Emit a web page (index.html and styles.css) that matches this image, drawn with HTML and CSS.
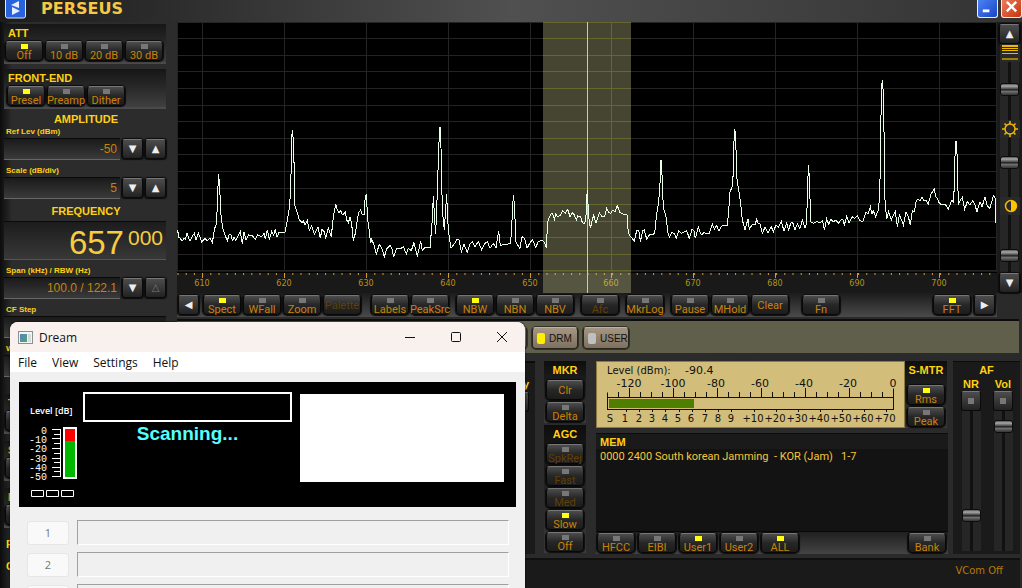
FILE: index.html
```html
<!DOCTYPE html>
<html lang="en">
<head>
    <meta charset="UTF-8">
    <meta name="viewport" content="width=device-width, initial-scale=1.0">
    <title>Perseus</title>
    <link rel="stylesheet" href="styles.css">
</head>
<body>
<div class="app">
    <header class="titlebar">
        <svg class="logo" viewBox="0 0 21 19">
            <rect x="0.5" y="-3" width="20" height="21" rx="2" fill="#2763dd" stroke="#dfe8fb"/>
            <path d="M14 1v7L6 5zM7 7v8l8-4z" fill="#e8efff"/>
        </svg>
        <h1>PERSEUS</h1>
        <button class="win-btn minimize" aria-label="Minimize"><svg viewBox="0 0 20 18"><path d="M5 11.500h7" stroke="#fff" stroke-width="3"/></svg></button>
        <button class="win-btn close" aria-label="Close"><svg viewBox="0 0 20 18"><path d="M5 2l10 10M15 2L5 12" stroke="#fff" stroke-width="2.500"/></svg></button>
    </header>

    <div class="main">
        <aside class="sidebar">
            <section class="group">
                <h2>ATT</h2>
                <div class="keys">
                    <button class="key on">Off</button>
                    <button class="key">10 dB</button>
                    <button class="key">20 dB</button>
                    <button class="key">30 dB</button>
                </div>
            </section>
            <section class="group front-end">
                <h2>FRONT-END</h2>
                <div class="keys">
                    <button class="key on">Presel</button>
                    <button class="key">Preamp</button>
                    <button class="key">Dither</button>
                </div>
            </section>

            <h2 class="heading">AMPLITUDE</h2>
            <div class="readout">
                <label for="ref">Ref Lev (dBm)</label>
                <div class="readout-row">
                    <input id="ref" type="text" value="-50">
                    <button class="arrow" aria-label="Down">&#9660;</button>
                    <button class="arrow" aria-label="Up">&#9650;</button>
                </div>
            </div>
            <div class="readout">
                <label for="scale">Scale (dB/div)</label>
                <div class="readout-row">
                    <input id="scale" type="text" value="5">
                    <button class="arrow" aria-label="Down">&#9660;</button>
                    <button class="arrow" aria-label="Up">&#9650;</button>
                </div>
            </div>

            <h2 class="heading">FREQUENCY</h2>
            <div class="frequency"><span class="khz">657</span><span class="hz">000</span></div>
            <div class="readout">
                <label for="span">Span (kHz) / RBW (Hz)</label>
                <div class="readout-row">
                    <input id="span" type="text" value="100.0 / 122.1">
                    <button class="arrow" aria-label="Down">&#9660;</button>
                    <button class="arrow dim" aria-label="Up">&#9651;</button>
                </div>
            </div>
            <div class="readout">
                <label for="step">CF Step</label>
                <div class="readout-row"><input id="step" type="text"></div>
            </div>
            <div class="readout">
                <label for="win">W</label>
                <div class="readout-row"><input id="win" type="text"></div>
            </div>
            <div class="more">
                <section class="group"><h2>T</h2><button class="key" aria-label="T"></button></section>
                <section class="group"><h2>S</h2><button class="key" aria-label="S"></button></section>
                <section class="group"><h2>I</h2><button class="key" aria-label="I"></button></section>
                <h2>P</h2>
                <h2>C</h2>
            </div>
        </aside>

        <div class="work">
            <div class="upper">
                <div class="spectrum">
                    <svg class="plot" viewBox="0 0 820 271">
                        <rect width="820" height="249" fill="#000"/>
                        <rect y="249" width="820" height="22" fill="#191919"/>
                        <path class="grid" d="M0 .5h820M0 16.500h820M0 33.500h820M0 49.500h820M0 66.500h820M0 83.500h820M0 99.500h820M0 116.500h820M0 132.500h820M0 149.500h820M0 166.500h820M0 182.500h820M0 199.500h820M0 215.500h820M0 232.500h820M0 248.500h820"/>
                        <path class="grid" d="M.5 0v249M25.500 0v249M107.500 0v249M189.500 0v249M271.500 0v249M353.500 0v249M434.500 0v249M516.500 0v249M598.500 0v249M680.500 0v249M762.500 0v249M819.500 0v249"/>
                        <path d="M0 250.500h820" stroke="#000"/>
                        <path class="ticks" d="M.5 252h820" stroke-width="2" stroke-dasharray="1 7.200"/>
                        <path class="ticks" d="M25.500 251v5M107.500 251v5M189.500 251v5M271.500 251v5M353.500 251v5M434.500 251v5M516.500 251v5M598.500 251v5M680.500 251v5M762.500 251v5"/>
                        <g class="scale">
                            <text x="25" y="264">610</text>
                            <text x="107" y="264">620</text>
                            <text x="189" y="264">630</text>
                            <text x="271" y="264">640</text>
                            <text x="353" y="264">650</text>
                            <text x="434" y="264">660</text>
                            <text x="516" y="264">670</text>
                            <text x="598" y="264">680</text>
                            <text x="680" y="264">690</text>
                            <text x="762" y="264">700</text>
                        </g>
                        <rect x="366" width="88" height="271" fill="rgba(215,215,155,.32)"/>
                        <path class="band-grid" d="M366 .5h88M366 16.500h88M366 33.500h88M366 49.500h88M366 66.500h88M366 83.500h88M366 99.500h88M366 116.500h88M366 132.500h88M366 149.500h88M366 166.500h88M366 182.500h88M366 199.500h88M366 215.500h88M366 232.500h88M366 248.500h88M434.500 0v249"/>
                        <path d="M410.500 0v271" stroke="#ffc83c"/>
                        <!-- trace, drawn at three units per pixel -->
                        <g class="trace">
                            <polyline transform="translate(-7 -2) scale(.33333)" points="23,630 26,652 31,655 36,664 42,655 46,658 51,640 55,652 60,662 66,650 73,640 78,660 85,640 90,652 95,666 105,655 112,662 120,655 127,668 134,625 140,610 143,515 146,462 150,525 153,585 158,625 165,645 172,662 178,643 184,645 187,664 192,650 197,660 203,650 211,635 217,672 222,637 228,660 236,645 248,648 256,658 263,645 275,650 282,640 286,658 292,630 298,658 305,635 311,645 316,628 321,652 327,637 345,637 352,600 359,560 363,470 364,365 367,330 370,360 373,460 374,555 380,572 388,600 396,608 400,602 405,615 412,602 418,632 425,617 433,642 444,622 451,654 456,628 462,634 467,654 475,625 484,650 488,608 492,580 497,553 502,570 507,577 512,572 517,585 526,577 530,600 535,608 540,592 545,612 550,662 556,640 562,600 566,577 572,570 577,585 582,585 585,540 589,522 593,600 598,635 602,670 605,658 612,675 619,702 628,673 636,687 643,710 651,685 660,676 667,690 671,712 680,685 690,687 700,680 709,702 715,685 724,692 732,668 742,710 752,662 757,692 765,682 780,684 786,610 790,528 794,600 797,642 802,515 806,390 809,322 812,322 815,500 819,590 823,630 830,522 833,600 838,655 843,685 852,673 860,660 867,660 874,695 882,673 892,697 900,672 907,665 915,680 925,665 935,690 945,670 952,665 960,685 970,670 978,683 986,632 991,678 1000,673 1010,673 1022,670 1026,600 1030,525 1034,560 1037,665 1045,678 1050,685 1056,650 1064,655 1071,685 1080,668 1088,660 1097,682 1105,665 1117,660"/>
                            <polyline transform="translate(363 -2) scale(.33333)" points="7,660 14,668 19,683 23,605 28,592 34,580 38,582 43,598 47,582 53,590 62,585 68,572 76,580 83,568 90,590 97,578 103,585 109,600 113,588 122,590 127,608 134,612 138,590 139,545 142,510 146,590 151,625 157,600 161,585 168,610 178,578 186,590 194,590 200,565 206,578 212,580 217,570 225,576 232,557 240,578 248,582 257,585 261,585 265,640 272,650 283,663 290,632 296,630 301,665 308,632 313,630 320,657 328,645 335,645 344,640 349,590 356,545 360,490 363,420 367,480 369,540 372,570 378,590 384,640 388,652 395,638 403,640 409,655 416,632 425,640 433,635 440,632 448,655 456,628 462,632 466,655 475,622 484,645 492,638 500,642 508,640 517,613 523,627 530,617 537,633 545,618 555,617 562,617 567,560 569,520 576,500 580,460 581,380 584,328 587,345 590,470 596,510 602,550 607,600 615,630 624,597 628,628 636,615 645,615 650,598 655,612 660,612 667,640 675,622 684,640 694,620 700,636 708,615 715,622 724,605 732,633 740,610 746,630 752,610 758,607 765,630 772,612 780,625 787,600 795,625 800,608 803,485 806,435 809,500 812,605 820,610 830,605 840,608 848,603 853,630 860,597 866,613 872,598 880,605 888,600 895,610 902,600 908,597 913,615 920,590 927,608 936,590 944,595 952,588 960,602 968,605 977,578 985,580 991,560 996,583 1000,572 1007,590 1015,570 1019,530 1022,375 1024,205 1027,180 1030,220 1033,390 1035,540 1040,598 1046,575 1054,600 1060,585 1066,575 1072,620 1078,585 1084,598 1090,615 1098,575 1105,590 1111,615 1117,572 1123,575 1128,545 1134,537 1140,542 1146,532 1152,543 1158,540 1165,552 1173,522 1183,507 1187,530 1192,535 1198,550 1206,555 1215,552 1225,567 1236,540 1241,548 1244,450 1246,370 1249,362 1252,420 1255,555 1261,540 1267,532 1274,568 1282,545 1290,555 1298,542 1304,552 1311,575 1320,545 1326,560 1335,532 1342,558 1350,565 1360,527 1366,535 1368,610"/>
                        </g>
                    </svg>
                    <div class="toolbar">
                        <button class="arrow" aria-label="Left">&#9664;</button>
                        <div class="keys">
                            <button class="key on">Spect</button>
                            <button class="key">WFall</button>
                            <button class="key">Zoom</button>
                            <button class="key plain" disabled>Palette</button>
                        </div>
                        <div class="keys">
                            <button class="key">Labels</button>
                            <button class="key">PeakSrc</button>
                        </div>
                        <div class="keys">
                            <button class="key on">NBW</button>
                            <button class="key">NBN</button>
                            <button class="key">NBV</button>
                        </div>
                        <div class="keys"><button class="key" disabled>Afc</button></div>
                        <div class="keys"><button class="key">MkrLog</button></div>
                        <div class="keys">
                            <button class="key">Pause</button>
                            <button class="key">MHold</button>
                            <button class="key plain">Clear</button>
                        </div>
                        <div class="keys fn"><button class="key">Fn</button></div>
                        <div class="keys end"><button class="key on">FFT</button></div>
                        <button class="arrow" aria-label="Right">&#9654;</button>
                    </div>
                </div>
                <div class="strip">
                    <button class="arrow" aria-label="Up">&#9650;</button>
                    <svg class="strip-icon" viewBox="0 0 20 18"><path d="M2 1h16v2H2zM2 4h16v1H2zM2 6h16v1H2zM2 9h16v1H2z" fill="#e8b90c"/><path d="M2 14h16v2H2z" fill="#a07c08"/></svg>
                    <input class="fader" type="range" value="54" aria-label="Range">
                    <svg class="strip-icon" viewBox="0 0 20 18"><g fill="none" stroke="#f2b705" stroke-width="1.500"><circle cx="10" cy="9" r="5"/><path d="M10 4V1M10 14v3M5 9H2M15 9h3M6.500 5.500l-2-2M13.500 5.500l2-2M6.500 12.500l-2 2M13.500 12.500l2 2"/></g></svg>
                    <input class="fader" type="range" value="61" aria-label="Brightness">
                    <svg class="strip-icon" viewBox="0 0 20 18"><circle cx="11" cy="9" r="5.500" fill="none" stroke="#f2b705" stroke-width="1.500"/><path d="M11 3.500a5.500 5.500 0 0 1 0 11z" fill="#ffc400"/></svg>
                    <input class="fader" type="range" value="24" aria-label="Contrast">
                    <button class="arrow" aria-label="Down">&#9660;</button>
                </div>
            </div>

            <div class="modes">
                <button class="mode" aria-label="Mode"></button>
                <button class="mode on">DRM</button>
                <button class="mode">USER</button>
            </div>

            <div class="lower">
                <section class="blank">
                    <h2>y</h2>
                    <button class="led-btn" aria-label="y"></button>
                </section>
                <div class="agc-col">
                    <section class="stack">
                        <h2>MKR</h2>
                        <button class="key plain">Clr</button>
                        <button class="key">Delta</button>
                    </section>
                    <section class="stack">
                        <h2>AGC</h2>
                        <button class="key" disabled>SpkRej</button>
                        <button class="key" disabled>Fast</button>
                        <button class="key" disabled>Med</button>
                        <button class="key on">Slow</button>
                        <button class="key">Off</button>
                    </section>
                </div>
                <div class="center">
                    <div class="meter-row">
                        <svg class="meter" viewBox="0 0 309 67">
                            <rect x=".5" y=".5" width="308" height="66" fill="#d2be7a" stroke="#8b7b43"/>
                            <text x="11" y="13">Level (dBm):</text>
                            <text class="dbm-value" x="89" y="13">-90.4</text>
                            <path d="M11.500 48.500v-17M22.500 36v-5M33.500 36v-9M44.500 36v-5M55.500 36v-5M66.500 36v-5M77.500 36v-9M88.500 36v-5M99.500 36v-5M110.500 36v-5M121.500 36v-9M132.500 36v-5M143.500 36v-5M154.500 36v-5M165.500 36v-9M176.500 36v-5M187.500 36v-5M198.500 36v-5M209.500 36v-9M220.500 36v-5M231.500 36v-5M242.500 36v-5M253.500 36v-9M264.500 36v-5M275.500 36v-5M286.500 36v-5M297.500 48.500v-21M11 36.500h287M11 48.500h287"/>
                            <path d="M30.500 48v3M43.500 48v3M56.500 48v3M69.500 48v3M83.500 48v3M96.500 48v3M109.500 48v3M122.500 48v3M135.500 48v3M158.500 48v3M180.500 48v3M202.500 48v3M224.500 48v3M246.500 48v3M268.500 48v3M290.500 48v3"/>
                            <rect x="13" y="38" width="85" height="9" fill="#4f7f00"/>
                            <g class="dbm">
                                <text x="33" y="26">-120</text>
                                <text x="77" y="26">-100</text>
                                <text x="120" y="26">-80</text>
                                <text x="164" y="26">-60</text>
                                <text x="208" y="26">-40</text>
                                <text x="252" y="26">-20</text>
                                <text x="297" y="26">0</text>
                            </g>
                            <g class="s-units">
                                <text x="14" y="61">S</text>
                                <text x="29" y="61">1</text>
                                <text x="43" y="61">2</text>
                                <text x="56" y="61">3</text>
                                <text x="69" y="61">4</text>
                                <text x="82" y="61">5</text>
                                <text x="95" y="61">6</text>
                                <text x="109" y="61">7</text>
                                <text x="122" y="61">8</text>
                                <text x="135" y="61">9</text>
                                <text x="157" y="61">+10</text>
                                <text x="179" y="61">+20</text>
                                <text x="201" y="61">+30</text>
                                <text x="223" y="61">+40</text>
                                <text x="245" y="61">+50</text>
                                <text x="267" y="61">+60</text>
                                <text x="289" y="61">+70</text>
                            </g>
                        </svg>
                        <section class="stack smtr">
                            <h2>S-MTR</h2>
                            <button class="key on">Rms</button>
                            <button class="key">Peak</button>
                        </section>
                    </div>
                    <section class="mem">
                        <h2>MEM</h2>
                        <ul><li>0000 2400 South korean Jamming&nbsp; - KOR (Jam)&nbsp;&nbsp; 1-7</li></ul>
                        <div class="mem-keys">
                            <button class="key">HFCC</button>
                            <button class="key">EIBI</button>
                            <button class="key on">User1</button>
                            <button class="key">User2</button>
                            <button class="key on">ALL</button>
                            <button class="key bank">Bank</button>
                        </div>
                    </section>
                </div>
                <section class="af">
                    <h2>AF</h2>
                    <div class="af-faders">
                        <div class="af-col">
                            <label for="nr">NR</label>
                            <button class="led-btn" aria-label="NR"></button>
                            <input class="fader" id="nr" type="range" value="23">
                        </div>
                        <div class="af-col">
                            <label for="vol">Vol</label>
                            <button class="led-btn" aria-label="Mute"></button>
                            <input class="fader" id="vol" type="range" value="93">
                        </div>
                    </div>
                </section>
            </div>
            <footer class="status"><span>VCom Off</span></footer>
        </div>
    </div>

    <div class="dream">
        <div class="dream-title">
            <svg class="dream-icon" viewBox="0 0 15 13"><rect x=".5" y=".5" width="14" height="12" fill="#f4f6f6" stroke="#8b9095"/><path d="M2 3h7v8H2z" fill="#4f9a8c"/><path d="M2 3h3v5H2z" fill="#5b86b0"/><path d="M10 3h3v8h-3z" fill="#d5dcdc"/></svg>
            <span>Dream</span>
            <div class="dream-controls">
                <button aria-label="Minimize"><svg viewBox="0 0 12 12"><path d="M1 6.500h10"/></svg></button>
                <button aria-label="Maximize"><svg viewBox="0 0 12 12"><rect x="1.500" y="1.500" width="9" height="9" rx="1"/></svg></button>
                <button aria-label="Close"><svg viewBox="0 0 12 12"><path d="M1 1l10 10M11 1L1 11"/></svg></button>
            </div>
        </div>
        <nav class="dream-menu">
            <a href="#">File</a>
            <a href="#">View</a>
            <a href="#">Settings</a>
            <a href="#">Help</a>
        </nav>
        <div class="display">
            <div class="level">
                <span>Level [dB]</span>
                <svg viewBox="0 0 64 80">
                    <g class="level-text">
                        <text x="28" y="14">0</text>
                        <text x="28" y="23">-10</text>
                        <text x="28" y="32">-20</text>
                        <text x="28" y="42">-30</text>
                        <text x="28" y="51">-40</text>
                        <text x="28" y="60">-50</text>
                    </g>
                    <path class="line" d="M33 9.500h9M35 14.500h6M33 18.500h8M35 23.500h6M33 28.500h8M35 33.500h6M33 38.500h8M35 42.500h6M33 47.500h8M35 51.500h6M33 56.500h9M41.500 9v48"/>
                    <rect x="44" y="7" width="14" height="52" fill="#fff"/>
                    <rect x="46" y="9" width="10" height="12" fill="#f00"/>
                    <rect x="46" y="21" width="10" height="36" fill="#00b800"/>
                    <path class="line" d="M12.500 70.500h12v6h-12zM27.500 70.500h12v6h-12zM42.500 70.500h12v6h-12z"/>
                </svg>
            </div>
            <div class="station">
                <div class="station-name"></div>
                <p>Scanning...</p>
            </div>
            <div class="picture"></div>
        </div>
        <div class="services">
            <button disabled>1</button><div class="service"></div>
            <button disabled>2</button><div class="service"></div>
            <button disabled aria-label="Next service"></button><div class="service"></div>
        </div>
    </div>
</div>
</body>
</html>
```
FILE: styles.css
```css
* {
    box-sizing: border-box;
}
body {
    margin: 0;
    background: #1a1a1a;
    color: #ffd013;
    font-family: "Liberation Sans", Arial, sans-serif;
    font-size: 11px;
}
h1, h2, p, ul {
    margin: 0;
    padding: 0;
}
button, input {
    margin: 0;
    padding: 0;
    border: 0;
    font: inherit;
}
h2 {
    font-size: 11px;
    line-height: 14px;
    font-weight: bold;
}
.app {
    position: relative;
    height: 100vh;
    overflow: hidden;
    background: linear-gradient(90deg, #0c0c0c, #2c2c2c 12px, #2a2a2a);
}

/* title bar */
.titlebar {
    display: flex;
    height: 22px;
    padding-left: 5px;
    background: linear-gradient(90deg, #1c1c1c, #303030 20%, #505050 50%, #333);
}
.logo {
    width: 21px;
    height: 19px;
}
.titlebar h1 {
    flex: 1;
    margin-left: 15px;
    color: #f6c944;
    font: bold 16px/18px "DejaVu Sans", sans-serif;
}
.win-btn {
    width: 21px;
    height: 18px;
    margin-right: 3px;
    border: 1px solid #eee;
    border-top: 0;
    border-radius: 0 0 3px 3px;
}
.win-btn svg {
    display: block;
    width: 19px;
    height: 17px;
}
.minimize {
    background: linear-gradient(135deg, #4d82f2, #1746c8);
}
.close {
    margin-right: 0;
    background: linear-gradient(135deg, #ec7b5c, #c9330c);
}
.main {
    display: flex;
}

/* buttons */
.key {
    position: relative;
    flex: none;
    width: 38px;
    height: 20px;
    padding-top: 8px;
    border: 1px solid #080808;
    border-top-color: #777;
    border-radius: 4px;
    background: linear-gradient(#4c4c4c, #262626 50%, #1c1c1c);
    box-shadow: 0 0 1px 1px #0c0c0c;
    color: #c98208;
    font-family: Roboto, sans-serif;
    font-size: 11px;
    line-height: 12px;
    white-space: nowrap;
    display: flex;
    justify-content: center;
}
.key::before {
    content: "";
    position: absolute;
    top: 2px;
    left: 15px;
    width: 7px;
    height: 5px;
    background: #777;
}
.key.on::before {
    background: #ffff10;
}
.key.plain {
    padding-top: 4px;
}
.key.plain::before {
    display: none;
}
.key:disabled {
    color: #614006;
}
.keys {
    display: flex;
    gap: 2px;
}
.arrow {
    flex: none;
    width: 21px;
    height: 20px;
    border: 1px solid #0a0a0a;
    border-top-color: #777;
    border-radius: 3px;
    background: linear-gradient(#4c4c4c, #222);
    box-shadow: 0 0 1px 1px #0c0c0c;
    color: #eee;
    font: 10px/16px "DejaVu Sans", sans-serif;
}
.arrow.dim {
    color: #777;
}

/* left column */
.sidebar {
    flex: none;
    width: 177px;
    padding: 2px 11px 0 4px;
}
.group {
    height: 40px;
    margin-bottom: 5px;
    padding: 2px 1px 0;
    border-bottom: 2px solid #4a4a4a;
    background: linear-gradient(#161616, #292929 50%, #404040);
}
.group h2 {
    padding-left: 3px;
    margin-bottom: 1px;
}
.front-end {
    margin-bottom: 2px;
    padding-left: 3px;
}
.front-end h2 {
    padding-left: 1px;
}
.heading {
    margin-top: 3px;
    padding-left: 2px;
    text-align: center;
}
.readout {
    margin-bottom: 5px;
}
.readout label {
    display: block;
    padding-left: 2px;
    font-size: 8px;
    font-weight: bold;
    line-height: 12px;
}
.readout-row {
    display: flex;
    align-items: center;
    gap: 2px;
}
.readout input {
    flex: 1;
    min-width: 0;
    height: 22px;
    padding-right: 3px;
    border-top: 1px solid #0a0a0a;
    border-bottom: 1px solid #666;
    background: linear-gradient(#1a1a1a, #3a3a3a);
    color: #c98208;
    font-size: 12px;
    text-align: right;
}
.frequency {
    display: flex;
    justify-content: flex-end;
    height: 39px;
    margin: 3px 0 5px;
    padding: 2px 3px 0 0;
    border-top: 1px solid #0a0a0a;
    border-bottom: 1px solid #555;
    background: linear-gradient(#1c1c1c, #383838);
    color: #f8cc3e;
}
.khz {
    margin-right: 4px;
    font-size: 33px;
    line-height: 38px;
}
.hz {
    font-size: 21px;
    line-height: 28px;
}
.more {
    padding-top: 12px;
}
.more .group {
    margin-bottom: 7px;
}
.more > h2 {
    padding: 2px 0 6px 2px;
}

/* spectrum */
.work {
    flex: 1;
    min-width: 0;
}
.upper {
    display: flex;
}
.spectrum {
    flex: 1;
    min-width: 0;
}
.plot {
    display: block;
    width: 100%;
}
.grid, .band-grid, .ticks {
    fill: none;
    stroke: #242424;
}
.band-grid {
    stroke: #66662f;
}
.ticks {
    stroke: #dc9a20;
}
.scale {
    fill: #b8930f;
    font: 8px "DejaVu Sans", sans-serif;
    text-anchor: middle;
}
.trace {
    fill: none;
    stroke: #e9ffe9;
    shape-rendering: crispEdges;
}
.trace polyline {
    vector-effect: non-scaling-stroke;
}
.toolbar {
    display: flex;
    height: 24px;
    padding: 2px 2px 0 1px;
    border-bottom: 1px solid #4a4a4a;
    background: linear-gradient(#1c1c1c, #484848);
}
.toolbar .keys {
    margin-right: 7px;
}
.toolbar .arrow + .keys {
    margin: 0 10px 0 4px;
}
.toolbar .fn {
    margin-left: 6px;
}
.toolbar .end {
    margin: 0 3px 0 auto;
}
.strip {
    display: flex;
    flex-direction: column;
    align-items: center;
    flex: none;
    width: 25px;
    padding-top: 2px;
    height: 271px;
    background: #1a1a1a;
}
.strip-icon {
    flex: none;
    width: 20px;
    height: 18px;
    background: #292929;
}
.strip .fader {
    flex: 1;
    min-height: 0;
}
.fader {
    appearance: none;
    writing-mode: vertical-lr;
    direction: rtl;
    width: 19px;
    background: linear-gradient(90deg, #262626 8px, #111 8px, #111 11px, #262626 11px);
}
.fader::-webkit-slider-thumb {
    appearance: none;
    width: 19px;
    height: 13px;
    border: 1px solid #0c0c0c;
    border-radius: 3px;
    background: linear-gradient(#555, #aaa 2px, #444 5px, #111 6px, #777 7px, #333);
}

/* mode bar */
.modes {
    display: flex;
    gap: 5px;
    height: 34px;
    margin: 2px 3px 8px 0;
    padding: 6px 0 0 304px;
    border-top: 2px solid #0c0c0c;
    background: #5f5f4b;
}
.mode {
    display: flex;
    align-items: center;
    gap: 4px;
    width: 46px;
    height: 22px;
    padding-left: 4px;
    border: 1px solid #292620;
    border-top-color: #c0b29f;
    border-radius: 4px;
    background: linear-gradient(#a59684, #7d705f);
    box-shadow: 0 0 0 1px #33322a;
    color: #111;
    font-size: 10px;
}
.mode::before {
    content: "";
    flex: none;
    width: 8px;
    height: 11px;
    border-radius: 2px;
    background: #c0c0c0;
}
.mode.on::before {
    background: #ffee00;
}

/* lower panels */
.lower {
    display: flex;
    height: 193px;
    padding-right: 2px;
}
.blank {
    display: flex;
    flex: 1;
    flex-direction: column;
    align-items: flex-end;
    gap: 1px;
    height: 193px;
    margin-right: 9px;
    padding: 14px 6px 0 0;
    border-top: 2px solid #0c0c0c;
    background: #1a1a1a;
}
.agc-col {
    width: 42px;
    margin-right: 10px;
}
.stack {
    display: flex;
    flex-direction: column;
    align-items: center;
    gap: 2px;
    width: 42px;
    padding-bottom: 1px;
    background: linear-gradient(#0e0e0e, #3c3c3c);
}
.stack h2 {
    height: 17px;
    padding-top: 2px;
}
.stack + .stack {
    margin-top: 2px;
}
.center {
    width: 352px;
}
.meter-row {
    display: flex;
}
.meter {
    width: 309px;
    height: 67px;
    fill: #111;
    font: 10px "DejaVu Sans", sans-serif;
}
.meter path {
    fill: none;
    stroke: #111;
}
.dbm, .s-units {
    text-anchor: middle;
}
.dbm, .dbm-value {
    font-size: 11px;
}
.smtr h2 {
    height: 22px;
}
.mem {
    margin-top: 5px;
    background: #1a1a1a;
    border-top: 1px solid #0c0c0c;
}
.mem h2 {
    padding: 1px 4px 0;
}
.mem ul {
    height: 83px;
    padding: 0 4px;
    background: #131313;
    border-bottom: 1px solid #080808;
    color: #f5c63a;
    font: 11px/16px Roboto, sans-serif;
    list-style: none;
}
.mem-keys {
    display: flex;
    gap: 3px;
    padding: 1px 2px 1px 1px;
    background: linear-gradient(#202020, #444);
}
.bank {
    margin-left: auto;
}
.af {
    width: 67px;
    margin-left: 5px;
    padding-top: 1px;
    border-top: 1px solid #0c0c0c;
    background: #1a1a1a;
    text-align: center;
}
.af-faders {
    display: flex;
    gap: 12px;
    padding-left: 8px;
}
.af-col {
    display: flex;
    flex-direction: column;
    align-items: center;
    width: 20px;
}
.af label {
    font-weight: bold;
    line-height: 14px;
}
.af .fader {
    height: 140px;
}
.led-btn {
    width: 20px;
    height: 20px;
    border: 1px solid #0a0a0a;
    border-top-color: #777;
    border-radius: 3px;
    background: linear-gradient(#4c4c4c, #222);
}
.led-btn::before {
    content: "";
    display: block;
    width: 6px;
    height: 6px;
    margin: auto;
    background: #777;
}
.status {
    height: 100px;
    margin: 4px 2px 0 0;
    padding-top: 3px;
    border-top: 2px solid #101010;
    background: #1a1a1a;
    color: #b87808;
    font: 10px/16px "DejaVu Sans", sans-serif;
    text-align: right;
}
.status span {
    padding-right: 17px;
}

/* Dream window */
.dream {
    position: absolute;
    top: 322px;
    left: 10px;
    width: 515px;
    height: 400px;
    border-radius: 8px 8px 0 0;
    overflow: hidden;
    background: #f0f0f0;
    color: #111;
    font-family: "Open Sans", "Noto Sans", sans-serif;
    font-size: 12px;
    box-shadow: 0 0 2px #000;
}
.dream-title {
    display: flex;
    align-items: center;
    height: 30px;
    padding-left: 8px;
    background: #f8f1ee;
}
.dream-icon {
    width: 15px;
    height: 13px;
    margin-right: 6px;
}
.dream-controls {
    display: flex;
    margin-left: auto;
}
.dream-controls button {
    width: 46px;
    height: 30px;
    background: none;
}
.dream-controls svg {
    display: block;
    width: 12px;
    height: 12px;
    margin: auto;
    fill: none;
    stroke: #111;
}
.dream-menu {
    display: flex;
    gap: 15px;
    height: 20px;
    padding-left: 8px;
    background: #fff;
    line-height: 21px;
}
.dream-menu a {
    color: #111;
    text-decoration: none;
}
.display {
    display: flex;
    height: 125px;
    margin: 10px 9px 13px;
    background: #000;
    color: #fff;
}
.level {
    width: 64px;
    padding-top: 22px;
}
.level span {
    display: block;
    height: 16px;
    padding-left: 11px;
    font-size: 9px;
    font-weight: 600;
    line-height: 14px;
    white-space: nowrap;
}
.level svg {
    display: block;
    width: 64px;
    height: 80px;
}
.level-text {
    fill: #fff;
    font: 10px "Liberation Mono", monospace;
    text-anchor: end;
}
.line {
    fill: none;
    stroke: #fff;
}
.station {
    width: 209px;
    padding-top: 10px;
}
.station-name {
    height: 30px;
    border: 2px solid #fff;
}
.station p {
    color: #54ffff;
    font: bold 19px/24px "Liberation Sans", Arial, sans-serif;
    text-align: center;
}
.picture {
    flex: 1;
    height: 88px;
    margin: 12px 12px 0 8px;
    background: #fff;
}
.services {
    display: grid;
    grid-template-columns: 42px 1fr;
    gap: 7px 8px;
    align-items: center;
    padding: 0 16px 0 17px;
}
.services button {
    height: 24px;
    border: 1px solid #e6e6e6;
    border-radius: 3px;
    background: #f9f9f9;
    color: #777;
    font-size: 11px;
}
.service {
    height: 25px;
    border: 1px solid #a0a0a0;
    border-right-color: #fff;
    border-bottom-color: #fff;
}
```
